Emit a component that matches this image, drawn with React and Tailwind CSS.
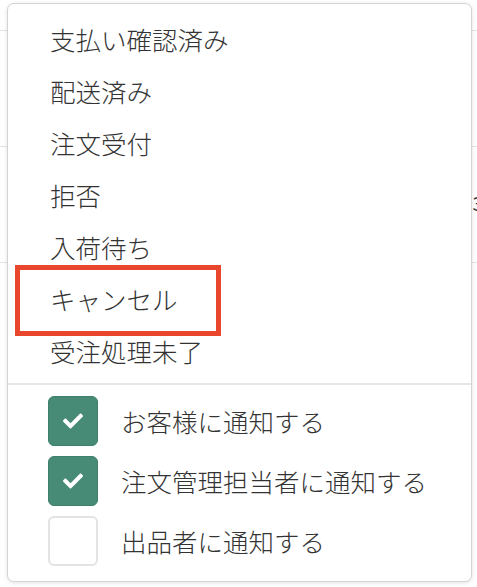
import { FaCheck } from 'react-icons/fa';

const statuses = [
  '支払い確認済み',
  '配送済み',
  '注文受付',
  '拒否',
  '入荷待ち',
  'キャンセル',
  '受注処理未了',
];

const notify = [
  { label: 'お客様に通知する', checked: true },
  { label: '注文管理担当者に通知する', checked: true },
  { label: '出品者に通知する', checked: false },
];

function Checkbox({ checked }) {
  if (checked) {
    return (
      <span className="flex h-[50px] w-[50px] shrink-0 items-center justify-center rounded-[6px] border border-[#3f7f6b] bg-[#478b77]">
        <FaCheck className="text-white" size={20} />
      </span>
    );
  }
  return <span className="h-[50px] w-[50px] shrink-0 rounded-[6px] border-2 border-[#e3e3e3] bg-white" />;
}

export default function App() {
  return (
    <div
      className="relative h-[587px] w-[477px] overflow-hidden bg-white text-[#333]"
      style={{ fontFamily: '"Noto Sans CJK JP", "Noto Sans", sans-serif' }}
    >
      {/* table rows behind the menu */}
      <div className="pt-[30px]">
        <div className="h-[116px] border-t border-[#e2e2e2]" />
        <div className="flex h-[116px] justify-end border-t border-[#e2e2e2] pt-[46px]">
          <span className="mr-[-6px] text-[19px] leading-none">3</span>
        </div>
        <div className="h-[116px] border-t border-[#e2e2e2]" />
      </div>

      {/* dropdown */}
      <div className="absolute left-[7px] top-[3px] h-[579px] w-[465px] rounded-[7px] border border-[#d4d4d4] bg-white shadow-[0_1px_4px_rgba(0,0,0,0.12)]">
        <ul className="pt-[9px]">
          {statuses.map((s) => (
            <li key={s} className="relative flex h-[52px] items-center pl-[42px] text-[25.5px] font-light leading-none">
              {s}
              {s === 'キャンセル' && (
                <span className="absolute left-[7px] top-[-8px] h-[71px] w-[206px] border-[5px] border-[#e8462d]" />
              )}
            </li>
          ))}
        </ul>
        <div className="mt-[6px] h-[2px] bg-[#e6e6e6]" />
        <div className="flex flex-col gap-[10px] pl-[40px] pt-[11px]">
          {notify.map((n) => (
            <label key={n.label} className="flex items-center gap-[23px]">
              <Checkbox checked={n.checked} />
              <span className="text-[25.5px] font-light leading-none">{n.label}</span>
            </label>
          ))}
        </div>
      </div>
    </div>
  );
}
